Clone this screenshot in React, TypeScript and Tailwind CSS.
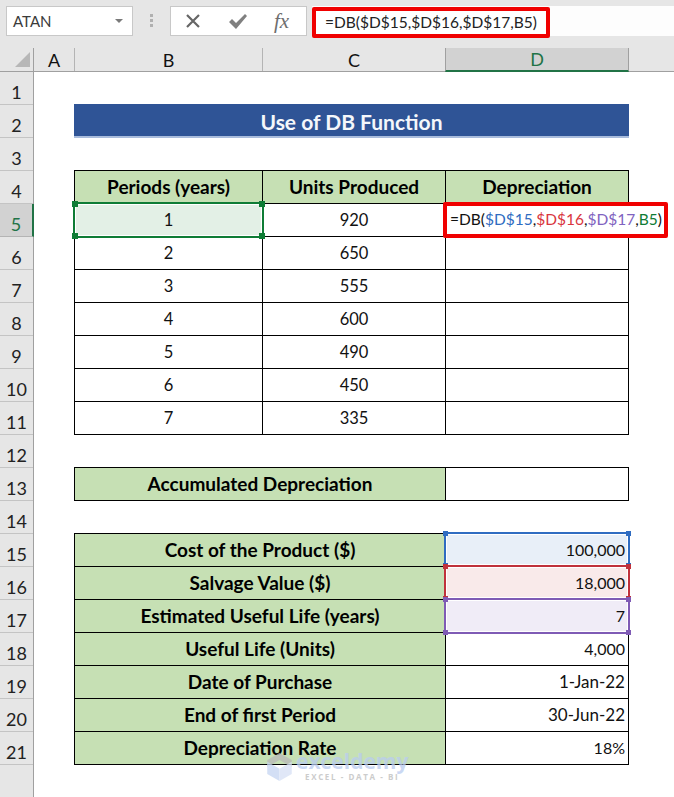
const periods = [
  ["2", "650"],
  ["3", "555"],
  ["4", "600"],
  ["5", "490"],
  ["6", "450"],
  ["7", "335"],
];

const details: { label: string; value: string; size: string; bg?: string }[] = [
  { label: "Cost of the Product ($)", value: "100,000", size: "text-[16px]", bg: "bg-[#e8eff8]" },
  { label: "Salvage Value ($)", value: "18,000", size: "text-[16px]", bg: "bg-[#f9eaea]" },
  { label: "Estimated Useful Life (years)", value: "7", size: "text-[16px]", bg: "bg-[#f0ecf7]" },
  { label: "Useful Life (Units)", value: "4,000", size: "text-[16px]" },
  { label: "Date of Purchase", value: "1-Jan-22", size: "text-[17px]" },
  { label: "End of first Period", value: "30-Jun-22", size: "text-[17px]" },
  { label: "Depreciation Rate", value: "18%", size: "text-[16px]" },
];

const RefBox: React.FC<{ className: string; handle: string }> = ({ className, handle }) => {
  const spots = [
    "-left-[3px] -top-[3px]",
    "-right-[3px] -top-[3px]",
    "-left-[3px] -bottom-[3px]",
    "-right-[3px] -bottom-[3px]",
  ];
  return (
    <div className={`absolute border-2 shadow-[inset_0_0_0_1px_white] ${className}`}>
      {spots.map((spot) => (
        <span key={spot} className={`absolute ${handle} ${spot}`} />
      ))}
    </div>
  );
};

const FormulaBar = () => (
  <div className="flex h-12 items-start gap-[5px] bg-[#e6e6e6] pl-[6px] pt-[6px]">
    <div className="flex h-[30px] w-[127px] items-center justify-between border border-[#c8c8c8] bg-white pl-[6px] pr-[9px] text-[15px] text-[#3b3b3b]">
      ATAN
      <span className="h-0 w-0 border-x-[4px] border-t-[4px] border-x-transparent border-t-[#7a7a7a]" />
    </div>
    <div className="mx-[12px] mt-[8px] flex flex-col gap-[2px]">
      <span className="h-[3px] w-[3px] bg-[#b0b0b0]" />
      <span className="h-[3px] w-[3px] bg-[#b0b0b0]" />
      <span className="h-[3px] w-[3px] bg-[#b0b0b0]" />
    </div>
    <div className="flex h-[30px] w-[137px] items-center border border-[#c8c8c8] bg-white pl-[14px]">
      <svg width="16" height="14" viewBox="0 0 16 14">
        <path d="M2 1 L14 13 M14 1 L2 13" stroke="#666666" strokeWidth="2.2" fill="none" />
      </svg>
      <svg className="ml-[28px]" width="18" height="15" viewBox="0 0 18 15">
        <path d="M0 8 L3 5 L7 9 L16 0 L18 2 L7 15 Z" fill="#808080" />
      </svg>
      <span className="ml-[27px] font-['Liberation_Serif',serif] text-[21px] italic leading-none text-[#6e6e6e]">fx</span>
    </div>
    <div className="relative h-[30px] flex-1 bg-[#fdfdfd]">
      <div className="absolute left-0 top-px flex h-[31px] w-[238px] items-center rounded-[2px] border-4 border-[#f00000] bg-white pl-[9px] text-[15.5px] text-[#222]">
        =DB($D$15,$D$16,$D$17,B5)
      </div>
    </div>
  </div>
);

const ColumnHeaders = () => (
  <div className="flex h-6 border-b border-[#a0a0a0] bg-[#e6e6e6] text-[18px] leading-none text-[#111]">
    <div className="relative w-[34px] border-r border-[#a0a0a0]">
      <svg className="absolute left-[15px] top-[4px]" width="16" height="16" viewBox="0 0 16 16">
        <path d="M15 0 V15 H0 Z" fill="#b7b7b7" />
      </svg>
    </div>
    <div className="flex w-[41px] items-center justify-center border-r border-[#b4b4b4]">A</div>
    <div className="flex w-[188px] items-center justify-center border-r border-[#b4b4b4]">B</div>
    <div className="flex w-[182px] items-center justify-center">C</div>
    <div className="-mb-px flex w-[184px] items-center justify-center border-x border-b-2 border-x-[#a0a0a0] border-b-[#217346] bg-[#d2d2d2] text-[#217346]">
      D
    </div>
  </div>
);

const RowHeaders = () => (
  <div className="w-[34px] border-r border-[#a0a0a0] bg-[#e6e6e6] text-[18px] text-[#222]">
    {Array.from({ length: 22 }, (_, i) => i + 1).map((n) =>
      n === 5 ? (
        <div
          key={n}
          className="-mr-px flex h-[33px] items-center justify-center border-b border-r-2 border-b-[#b4b4b4] border-r-[#217346] bg-[#d2d2d2] pt-[9px] text-[#217346]"
        >
          {n}
        </div>
      ) : (
        <div key={n} className="flex h-[33px] items-center justify-center border-b border-[#c4c4c4] pt-[9px]">
          {n === 22 ? "" : n}
        </div>
      )
    )}
  </div>
);

const Cell: React.FC<{
  children?: React.ReactNode;
  className?: string;
}> = ({ children, className = "" }) => (
  <div className={`flex h-[33px] items-center border-b border-r border-black ${className}`}>
    {children}
  </div>
);

const head = "justify-center bg-[#c6e0b4] text-[19px] font-bold text-black";
const plain = "justify-center text-[16.5px] text-[#111]";

const Sheet = () => (
  <div className="relative flex-1 bg-white">
    <div className="h-[33px]" />
    <div className="-mt-px ml-[40px] flex h-[34px] w-[555px] items-center justify-center border-b-2 border-[#a9bcdc] bg-[#2f5496] pt-[3px] text-[21px] font-bold text-[#f4f7fb]">
      Use of DB Function
    </div>
    <div className="h-[33px]" />

    <div className="-mt-px ml-[40px] grid w-[555px] grid-cols-[188px_183px_183px] border-l border-t border-black">
      <Cell className={head}>Periods (years)</Cell>
      <Cell className={head}>Units Produced</Cell>
      <Cell className={head}>Depreciation</Cell>
      <Cell className={`${plain} bg-[#e3f0e6]`}>1</Cell>
      <Cell className={plain}>920</Cell>
      <Cell />
      {periods.map(([period, units]) => (
        <div key={period} className="contents">
          <Cell className={plain}>{period}</Cell>
          <Cell className={plain}>{units}</Cell>
          <Cell />
        </div>
      ))}
    </div>

    <div className="h-[33px]" />
    <div className="-mt-px ml-[40px] grid w-[555px] grid-cols-[371px_183px] border-l border-t border-black">
      <Cell className={head}>Accumulated Depreciation</Cell>
      <Cell />
    </div>

    <div className="h-[33px]" />
    <div className="-mt-px ml-[40px] grid w-[555px] grid-cols-[371px_183px] border-l border-t border-black">
      {details.map((row) => (
        <div key={row.label} className="contents">
          <Cell className={head}>{row.label}</Cell>
          <Cell className={`justify-end pr-[3px] text-[#111] ${row.size} ${row.bg ?? ""}`}>{row.value}</Cell>
        </div>
      ))}
    </div>

    {/* selection and formula reference outlines */}
    <RefBox className="left-[39px] top-[130px] h-[36px] w-[191px] border-[#0e7c35]" handle="h-[6px] w-[6px] bg-[#0e7c35]" />
    <RefBox className="left-[410px] top-[460px] h-[35px] w-[186px] border-[#2f6cc1]" handle="h-[5px] w-[5px] bg-[#2f6cc1]" />
    <RefBox className="left-[410px] top-[493px] h-[35px] w-[186px] border-[#c0323c]" handle="h-[5px] w-[5px] bg-[#c0323c]" />
    <RefBox className="left-[410px] top-[526px] h-[36px] w-[186px] border-[#7f5bb5]" handle="h-[5px] w-[5px] bg-[#7f5bb5]" />

    {/* formula being edited, spills past column D */}
    <div className="absolute left-[409px] top-[130px] flex h-[36px] w-[225px] items-center rounded-[2px] border-4 border-[#f00000] bg-white pl-[3px] text-[15.5px] text-[#111]">
      =DB(
      <span className="text-[#2f6cc1]">$D$15</span>,
      <span className="text-[#d9363e]">$D$16</span>,
      <span className="text-[#8062c0]">$D$17</span>,
      <span className="text-[#0e7c35]">B5</span>)
    </div>

    {/* watermark */}
    <div className="absolute left-[232px] top-[678px] flex items-start gap-[3px] opacity-75">
      <svg className="mt-[3px]" width="27" height="28" viewBox="0 0 28 32">
        <path d="M14 0 L28 8 V16 L14 8 L0 16 V8 Z" fill="#b9b9b9" />
        <path d="M0 10 L14 18 V32 L0 24 Z" fill="#c5d5f2" />
        <path d="M28 10 L14 18 V32 L28 24 Z" fill="#d6e0f5" />
      </svg>
      <div className="flex flex-col items-center font-['Open_Sans',sans-serif]">
        <span className="text-[21px] font-bold leading-[22px] text-[#b9ccf0]">exceldemy</span>
        <span className="text-[8px] font-bold leading-[10px] tracking-[1.6px] text-[#bbbbbb]">EXCEL - DATA - BI</span>
      </div>
    </div>
  </div>
);

export default function App() {
  return (
    <div className="h-[797px] w-[674px] overflow-hidden bg-white font-['Lato',sans-serif]">
      <FormulaBar />
      <ColumnHeaders />
      <div className="flex">
        <RowHeaders />
        <Sheet />
      </div>
    </div>
  );
}
